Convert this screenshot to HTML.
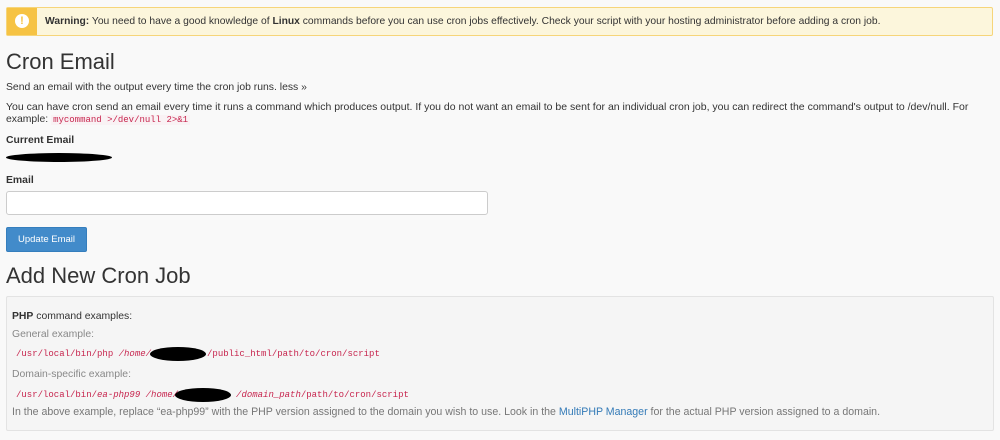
<!DOCTYPE html>
<html><head><style>
body{margin:0;width:1000px;height:440px;background:#f9f9f9;font-family:"Liberation Sans",sans-serif;color:#333;position:relative;overflow:hidden}
.a{position:absolute;white-space:nowrap;font-size:10.4px}
.warn{position:absolute;left:6px;top:7px;width:985px;height:27px;background:#fcf6dc;border:1px solid #f6d57a;border-radius:2px}
.warn .ic{position:absolute;left:0;top:0;width:30px;height:27px;background:#f6c344}
.warn .ic span{position:absolute;left:8px;top:6px;width:14px;height:14px;border-radius:50%;background:#fff;color:#f6c344;font-size:11px;font-weight:bold;text-align:center;line-height:14px}
h1{position:absolute;margin:0;font-weight:normal;font-size:22px;color:#333;left:6px}
code,.m{font-family:"Liberation Mono",monospace;color:#c7254e;font-size:9px}
.red{position:absolute;background:#000;border-radius:50%}
</style></head><body>
<div class="warn"><div class="ic"><span>!</span></div><div class="a" style="left:38px;top:8px;font-size:10.3px"><b>Warning:</b> You need to have a good knowledge of <b>Linux</b> commands before you can use cron jobs effectively. Check your script with your hosting administrator before adding a cron job.</div></div>
<h1 style="top:49px">Cron Email</h1>
<div class="a" style="left:6px;top:82px">Send an email with the output every time the cron job runs. less »</div>
<div class="a" style="left:6px;top:101px;font-size:10.5px">You can have cron send an email every time it runs a command which produces output. If you do not want an email to be sent for an individual cron job, you can redirect the command's output to /dev/null. For</div>
<div class="a" style="left:6px;top:114px">example: <code style="background:#f9f2f4;padding:0 2px">mycommand &gt;/dev/null 2&gt;&amp;1</code></div>
<div class="a" style="left:6px;top:135px;font-weight:bold">Current Email</div>
<div class="red" style="left:6px;top:153px;width:106px;height:9px"></div>
<div class="a" style="left:6px;top:175px;font-weight:bold">Email</div>
<div style="position:absolute;left:6px;top:191px;width:480px;height:22px;background:#fff;border:1px solid #ccc;border-radius:3px"></div>
<div style="position:absolute;left:6px;top:227px;width:79px;height:23px;background:#428bca;border:1px solid #357ebd;border-radius:2px;color:#fff;font-size:9.5px;text-align:center;line-height:23px">Update Email</div>
<h1 style="top:263px">Add New Cron Job</h1>
<div style="position:absolute;left:6px;top:296px;width:986px;height:133px;background:#f5f5f5;border:1px solid #e3e3e3;border-radius:2px"></div>
<div class="a" style="left:12px;top:311px;color:#333"><b>PHP</b> command examples:</div>
<div class="a" style="left:12px;top:329px;color:#888">General example:</div>
<div class="a m" style="left:16px;top:349px">/usr/local/bin/php <i>/home/</i><span style="display:inline-block;width:56px"></span>/public_html/path/to/cron/script</div>
<div class="red" style="left:150px;top:347px;width:56px;height:14px"></div>
<div class="a" style="left:12px;top:369px;color:#888">Domain-specific example:</div>
<div class="a m" style="left:16px;top:390px">/usr/local/bin/<i>ea-php99</i> <i>/home/</i><span style="display:inline-block;width:58px"></span><i>/domain_path</i>/path/to/cron/script</div>
<div class="red" style="left:175px;top:388px;width:56px;height:14px"></div>
<div class="a" style="left:12px;top:406px;color:#777;font-size:10.6px">In the above example, replace “ea-php99” with the PHP version assigned to the domain you wish to use. Look in the <span style="color:#337ab7">MultiPHP Manager</span> for the actual PHP version assigned to a domain.</div>
</body></html>
